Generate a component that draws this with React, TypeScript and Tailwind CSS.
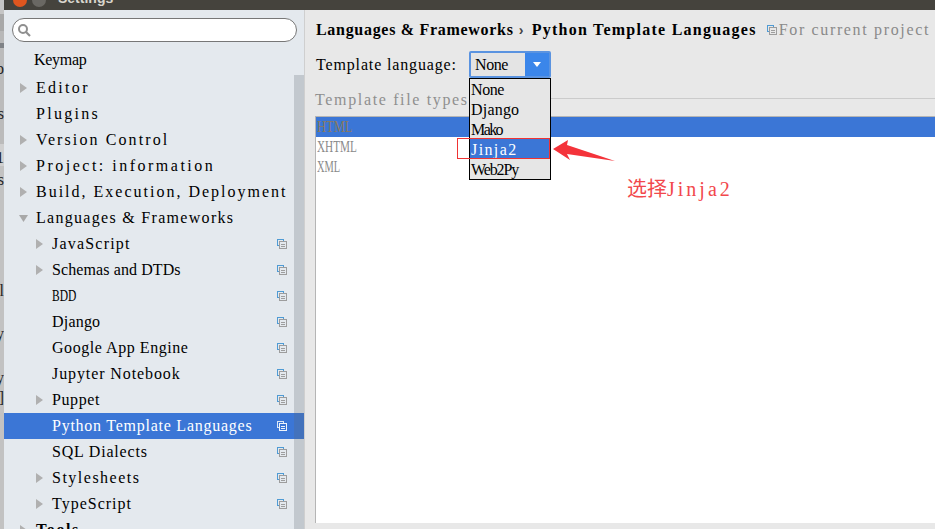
import React from "react";

const CopyIcon = ({ light = false, className = "" }: { light?: boolean; className?: string }) => (
  <svg width="10" height="10" viewBox="0 0 10 10" className={className} shapeRendering="crispEdges">
    <path d="M0.5 7V0.5H7" stroke={light ? "#dbe6f5" : "#4f9bd4"} fill="none" />
    <path d="M1 6.5H2M6.5 1V2" stroke={light ? "#dbe6f5" : "#4f9bd4"} fill="none" />
    <rect x="2.5" y="2.5" width="7" height="7" fill="none" stroke={light ? "#eef3fb" : "#9d9d9d"} />
    <path d="M4 5H8M4 7H8" stroke={light ? "#eef3fb" : "#9d9d9d"} />
  </svg>
);

const Tri = ({ down = false }: { down?: boolean }) => (
  <svg width="9" height="10" viewBox="0 0 9 10" className="shrink-0">
    {down ? <path d="M0 2H9L4.5 9Z" fill="#a8a8a8" /> : <path d="M1 0L8 5L1 10Z" fill="#b0b0b0" />}
  </svg>
);

type Row = { t: string; tr: string; arrow?: boolean; down?: boolean; child?: boolean; sel?: boolean };

const rows: Row[] = [
  { t: "Editor", tr: "tracking-[2.3px]", arrow: true },
  { t: "Plugins", tr: "tracking-[2.3px]" },
  { t: "Version Control", tr: "tracking-[2.1px]", arrow: true },
  { t: "Project: information", tr: "tracking-[2.5px]", arrow: true },
  { t: "Build, Execution, Deployment", tr: "tracking-[2px]", arrow: true },
  { t: "Languages & Frameworks", tr: "tracking-[1.3px]", arrow: true, down: true },
  { t: "JavaScript", tr: "tracking-[1.2px]", arrow: true, child: true },
  { t: "Schemas and DTDs", tr: "tracking-[0.1px]", arrow: true, child: true },
  { t: "BDD", tr: "origin-left scale-x-[0.72]", child: true },
  { t: "Django", tr: "tracking-[0.2px]", child: true },
  { t: "Google App Engine", tr: "tracking-[0.55px]", child: true },
  { t: "Jupyter Notebook", tr: "tracking-[0.9px]", child: true },
  { t: "Puppet", tr: "tracking-[0.6px]", arrow: true, child: true },
  { t: "Python Template Languages", tr: "tracking-[0.75px]", child: true, sel: true },
  { t: "SQL Dialects", tr: "tracking-[0.8px]", child: true },
  { t: "Stylesheets", tr: "tracking-[1.5px]", arrow: true, child: true },
  { t: "TypeScript", tr: "tracking-[1px]", arrow: true, child: true },
];

const options = [
  { t: "None", tr: "tracking-[-0.4px]" },
  { t: "Django", tr: "tracking-[0.2px]" },
  { t: "Mako", tr: "tracking-[-1.6px]" },
  { t: "Jinja2", tr: "tracking-[1.4px]" },
  { t: "Web2Py", tr: "tracking-[-1.1px]" },
];

const files = [
  { t: "HTML", c: "origin-left scale-x-[0.78] text-[#8a7a60]", bg: "bg-[#3b76d6]" },
  { t: "XHTML", c: "origin-left scale-x-[0.7] text-[#8a8a8a]", bg: "" },
  { t: "XML", c: "origin-left scale-x-[0.65] text-[#8a8a8a]", bg: "" },
];

const serif = "font-['Liberation_Serif','Noto_Sans_CJK_SC',serif] text-[16px] leading-[16px] whitespace-pre";

function TreeRow({ r }: { r: Row }) {
  return (
    <div className={`flex h-[26px] items-center shrink-0 ${r.sel ? "bg-[#3b76d6] text-white" : "text-black"}`}>
      <div className={`flex items-center ${r.child ? "w-[48px] pl-[31px]" : "w-[32px] pl-[15px]"}`}>
        {r.arrow && <Tri down={r.down} />}
      </div>
      <span className={`${serif} ${r.tr} flex-1`}>{r.t}</span>
      {r.child && <CopyIcon light={r.sel} className="mr-[17px]" />}
    </div>
  );
}

const ghost = "absolute right-0 font-['Liberation_Serif',serif] text-[16px] leading-[16px] text-[#222]";

export default function App() {
  return (
    <div className="relative flex h-[529px] w-[935px] overflow-hidden bg-[#e8e8e8]">
      {/* strip of the window behind */}
      <div className="relative flex w-[4px] shrink-0 flex-col overflow-hidden bg-[#bdbdbd]">
        <div className="h-[14px] bg-[#c5c5c5]" />
        <div className="h-[17px] bg-[#a8a8a8]" />
        <div className="h-[12px] bg-[#b8b8b8]" />
        <div className="h-[5px] bg-[#7f8286]" />
        <div className="h-[96px] bg-[#bbbbbb]" />
        <div className="h-[22px] bg-[#d0d0d0]" />
        <div className="flex-1 bg-[#c2c2c2]" />
        <span className={`${ghost} top-[61px]`}>o</span>
        <span className={`${ghost} top-[106px]`}>s</span>
        <span className={`${ghost} top-[150px]`}>1</span>
        <span className={`${ghost} top-[172px]`}>s</span>
        <span className={`${ghost} top-[283px]`}>l</span>
        <span className={`${ghost} top-[326px]`}>y</span>
        <span className={`${ghost} top-[370px]`}>y</span>
        <span className={`${ghost} top-[390px]`}>]</span>
      </div>

      <div className="flex min-w-0 flex-1 flex-col">
        {/* title bar */}
        <div className="relative h-[10px] shrink-0 overflow-hidden bg-[#45433d]">
          <div className="absolute left-[9px] top-[-7px] h-[14px] w-[14px] rounded-full bg-[#e0561f]" />
          <div className="absolute left-[28px] top-[-7px] h-[14px] w-[14px] rounded-full bg-[#6a6863]" />
          <span className="absolute left-[54px] top-[-10px] font-['Liberation_Sans',sans-serif] text-[14px] font-bold leading-[16px] text-[#d8d5cc]">
            Settings
          </span>
        </div>

        <div className="flex min-h-0 flex-1">
          {/* sidebar */}
          <div className="relative flex w-[300px] shrink-0 flex-col overflow-hidden bg-[#e4e9ee]">
            <div className="mx-[8px] mt-[8px] flex h-[24px] w-[285px] shrink-0 items-center rounded-full border border-[#777] bg-white pl-[4px]">
              <svg width="14" height="14" viewBox="0 0 14 14" fill="none" stroke="#8f8f8f">
                <circle cx="6" cy="6" r="4" strokeWidth="2" />
                <path d="M9 9L13 13" strokeWidth="2.2" />
              </svg>
            </div>
            <div className="flex h-[28px] shrink-0 items-end pb-[2px] pl-[30px]">
              <span className={`${serif} tracking-[-0.3px] text-black`}>Keymap</span>
            </div>
            <div className="mt-[5px] flex flex-col pb-[10px]">
              {rows.map((r) => (
                <TreeRow key={r.t} r={r} />
              ))}
              <div className="flex h-[26px] shrink-0 items-center pl-[15px] text-black">
                <Tri />
                <span className={`${serif} tracking-[1.6px] ml-[8px] font-bold`}>Tools</span>
              </div>
            </div>
            {/* scrollbar */}
            <div className="absolute bottom-0 right-0 top-[65px] w-[10px] bg-[#5c6670]/25" />
          </div>

          {/* main */}
          <div className="flex min-w-0 flex-1 flex-col border-l border-[#cfcfcf] pl-[11px]">
            <div className="mt-[11px] flex h-[18px] shrink-0 items-center">
              <span className={`${serif} font-bold tracking-[0.7px] text-black`}>Languages &amp; Frameworks</span>
              <span className="ml-[5px] mr-[3px] w-[10px] font-['Liberation_Sans',sans-serif] text-[14px] font-bold leading-[16px] text-[#444]">›</span>
              <span className={`${serif} font-bold tracking-[1.25px] text-black`}>Python Template Languages</span>
              <CopyIcon className="ml-[10px]" />
              <span className={`${serif} tracking-[1.65px] ml-[2px] text-[#8a8a8a]`}>For current project</span>
            </div>

            <div className="mt-[12px] flex h-[27px] shrink-0 items-center">
              <span className={`${serif} tracking-[0.85px] w-[153px] text-black`}>Template language:</span>
              <div className="flex h-[27px] w-[82px] items-stretch rounded-[2px] border-2 border-[#5a93e0] bg-[#3b86ea]">
                <div className="flex flex-1 items-center bg-[#e4e4e4] pl-[4px]">
                  <span className={`${serif} tracking-[-0.4px] text-black`}>None</span>
                </div>
                <div className="flex w-[24px] items-center justify-center">
                  <div className="h-0 w-0 border-x-[4px] border-t-[5px] border-x-transparent border-t-white" />
                </div>
              </div>
            </div>

            <div className="-ml-[1px] mt-[13px] flex h-[18px] shrink-0 items-center">
              <span className={`${serif} tracking-[1.65px] text-[#8f8f8f]`}>Template file types</span>
              <div className="mb-[4px] h-px flex-1 bg-[#cbcbcb]" />
            </div>

            <div className="-ml-[1px] mb-[6px] mt-[7px] flex min-h-0 flex-1 flex-col border-l border-t border-[#b5b5b5] bg-white">
              {files.map((f) => (
                <div key={f.t} className={`flex h-[20px] items-center pl-[1px] ${f.bg}`}>
                  <span className={`${serif} ${f.c}`}>{f.t}</span>
                </div>
              ))}
            </div>
          </div>
        </div>
      </div>

      {/* open dropdown */}
      <div className="absolute left-[469px] top-[78px] flex h-[102px] w-[82px] flex-col border border-black bg-[#e6e6e6]">
        {options.map((o) => (
          <div
            key={o.t}
            className={`flex h-[20px] items-center pl-[1px] pt-[1px] ${o.t === "Jinja2" ? "bg-[#3b76d6] text-white" : "text-black"}`}
          >
            <span className={`${serif} ${o.tr}`}>{o.t}</span>
          </div>
        ))}
      </div>

      {/* annotations */}
      <div className="absolute left-[457px] top-[138px] h-[21px] w-[93px] border border-[#f03333]" />
      <svg width="72" height="26" viewBox="0 0 72 26" className="absolute left-[548px] top-[138px]">
        <path d="M5 11L20 2L19 7L67 23L19 16L22 22Z" fill="#f4333a" />
      </svg>
      <span className="absolute left-[627px] top-[177px] whitespace-pre font-['Liberation_Serif','Noto_Sans_CJK_SC',serif] text-[20px] leading-[24px] text-[#f2484c]">
        选择<span className="tracking-[3px]">Jinja2</span>
      </span>
    </div>
  );
}
